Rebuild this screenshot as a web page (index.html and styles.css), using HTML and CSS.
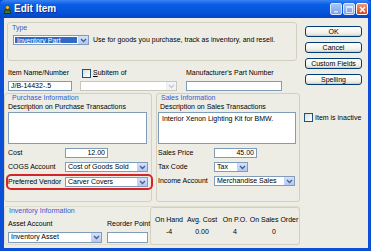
FILE: index.html
```html
<!DOCTYPE html>
<html lang="en">
<head>
    <meta charset="UTF-8">
    <title>Edit Item</title>
    <link rel="stylesheet" href="styles.css">
</head>
<body>
    <div class="window">
        <div class="titlebar">
            <svg class="app-icon" width="9" height="9" viewBox="0 0 9 9">
                <circle cx="4.5" cy="2.5" r="2" fill="#e8c020" stroke="#5a3a00" stroke-width="0.8"/>
                <path d="M1 8.5 L2 5 L7 5 L8 8.5 Z" fill="#3a7a20" stroke="#2a2a00" stroke-width="0.8"/>
            </svg>
            <span class="title">Edit Item</span>
            <div class="controls">
                <span class="ctl ctl-min"><svg width="9" height="9" viewBox="0 0 9 9"><rect x="2" y="6" width="4" height="1.5" fill="#fff"/></svg></span>
                <span class="ctl ctl-max"><svg width="9" height="9" viewBox="0 0 9 9"><rect x="1.5" y="1.5" width="6" height="6" fill="none" stroke="#fff" stroke-width="1"/><rect x="1.5" y="1.5" width="6" height="1.5" fill="#fff"/></svg></span>
                <span class="ctl ctl-close"><svg width="9" height="9" viewBox="0 0 9 9"><path d="M2 2 L7 7 M7 2 L2 7" stroke="#fff" stroke-width="1.5"/></svg></span>
            </div>
        </div>
        <div class="frame">
            <div class="client">
                <div class="main">
                    <!-- Type -->
                    <div class="group type-group">
                        <div class="type-label">Type</div>
                        <div class="type-row">
                            <div class="combo type-combo">
                                <span class="val selected">Inventory Part</span>
                                <span class="arrow"><svg width="7" height="7" viewBox="0 0 7 7"><path d="M1 2 L3.5 4.5 L6 2" fill="none" stroke="#4d6185" stroke-width="1.4"/></svg></span>
                            </div>
                            <span class="type-desc">Use for goods you purchase, track as inventory, and resell.</span>
                        </div>
                    </div>

                    <!-- Item name row -->
                    <div class="ident-row">
                        <div class="field field-name">
                            <div class="lbl">Item Name/Number</div>
                            <div class="input">J/B-14432-.5</div>
                        </div>
                        <div class="field field-sub">
                            <div class="lbl check-lbl"><span class="checkbox"></span><span><u>S</u>ubitem of</span></div>
                            <div class="combo disabled sub-combo">
                                <span class="val"></span>
                                <span class="arrow"><svg width="7" height="7" viewBox="0 0 7 7"><path d="M1 2 L3.5 4.5 L6 2" fill="none" stroke="#c2c8d4" stroke-width="1.4"/></svg></span>
                            </div>
                        </div>
                        <div class="field field-mfr">
                            <div class="lbl">Manufacturer's Part Number</div>
                            <div class="input"></div>
                        </div>
                    </div>

                    <!-- Purchase / Sales -->
                    <div class="info-row">
                        <div class="group purchase-group">
                            <div class="group-title">Purchase Information</div>
                            <div class="desc-lbl">Description on Purchase Transactions</div>
                            <div class="textarea"></div>
                            <div class="form-row">
                                <span class="row-lbl">Cost</span>
                                <div class="input num cost-input">12.00</div>
                            </div>
                            <div class="form-row">
                                <span class="row-lbl">COGS Account</span>
                                <div class="combo wide-combo">
                                    <span class="val">Cost of Goods Sold</span>
                                    <span class="arrow"><svg width="7" height="7" viewBox="0 0 7 7"><path d="M1 2 L3.5 4.5 L6 2" fill="none" stroke="#4d6185" stroke-width="1.4"/></svg></span>
                                </div>
                            </div>
                            <div class="form-row highlight">
                                <span class="row-lbl">Preferred Vendor</span>
                                <div class="combo wide-combo">
                                    <span class="val">Carver Covers</span>
                                    <span class="arrow"><svg width="7" height="7" viewBox="0 0 7 7"><path d="M1 2 L3.5 4.5 L6 2" fill="none" stroke="#4d6185" stroke-width="1.4"/></svg></span>
                                </div>
                            </div>
                        </div>
                        <div class="group sales-group">
                            <div class="group-title">Sales Information</div>
                            <div class="desc-lbl">Description on Sales Transactions</div>
                            <div class="textarea">Interior Xenon Lighting Kit for BMW.</div>
                            <div class="form-row">
                                <span class="row-lbl">Sales Price</span>
                                <div class="input num price-input">45.00</div>
                            </div>
                            <div class="form-row">
                                <span class="row-lbl">Tax Code</span>
                                <div class="combo tax-combo">
                                    <span class="val">Tax</span>
                                    <span class="arrow"><svg width="7" height="7" viewBox="0 0 7 7"><path d="M1 2 L3.5 4.5 L6 2" fill="none" stroke="#4d6185" stroke-width="1.4"/></svg></span>
                                </div>
                            </div>
                            <div class="form-row">
                                <span class="row-lbl">Income Account</span>
                                <div class="combo income-combo">
                                    <span class="val">Merchandise Sales</span>
                                    <span class="arrow"><svg width="7" height="7" viewBox="0 0 7 7"><path d="M1 2 L3.5 4.5 L6 2" fill="none" stroke="#4d6185" stroke-width="1.4"/></svg></span>
                                </div>
                            </div>
                        </div>
                    </div>

                    <!-- Inventory -->
                    <div class="group inventory-group">
                        <div class="inv-left">
                            <div class="group-title">Inventory Information</div>
                            <div class="inv-fields">
                                <div class="field">
                                    <div class="lbl">Asset Account</div>
                                    <div class="combo asset-combo">
                                        <span class="val">Inventory Asset</span>
                                        <span class="arrow"><svg width="7" height="7" viewBox="0 0 7 7"><path d="M1 2 L3.5 4.5 L6 2" fill="none" stroke="#4d6185" stroke-width="1.4"/></svg></span>
                                    </div>
                                </div>
                                <div class="field">
                                    <div class="lbl">Reorder Point</div>
                                    <div class="input reorder-input"></div>
                                </div>
                            </div>
                        </div>
                        <div class="inv-stats">
                            <div class="stat stat-hand"><span>On Hand</span><span>-4</span></div>
                            <div class="stat stat-avg"><span>Avg. Cost</span><span>0.00</span></div>
                            <div class="stat stat-po"><span>On P.O.</span><span>4</span></div>
                            <div class="stat stat-so"><span>On Sales Order</span><span>0</span></div>
                        </div>
                    </div>
                </div>

                <div class="side">
                    <button class="btn">OK</button>
                    <button class="btn">Cancel</button>
                    <button class="btn">Custom Fields</button>
                    <button class="btn">Spelling</button>
                    <div class="inactive"><span class="checkbox"></span><span>Item is inactive</span></div>
                </div>
            </div>
        </div>
    </div>
</body>
</html>
```

FILE: styles.css
```css
/* Base */
body {
    margin: 0;
    font-family: 'Liberation Sans', Arial, sans-serif;
    font-size: 7px;
    line-height: 8px;
    color: #000;
}

/* Window frame */
.window {
    width: 371px;
    height: 251px;
    display: flex;
    flex-direction: column;
    background: #0b4fd6;
}

.titlebar {
    height: 18px;
    display: flex;
    align-items: center;
    padding: 0 3px 0 3px;
    background: linear-gradient(#3b84f3, #0a5ee6 25%, #0452da 70%, #0644c4);
    border-radius: 5px 5px 0 0;
}

.app-icon {
    margin-right: 2px;
}

.title {
    color: #fff;
    font-weight: bold;
    font-size: 10px;
    text-shadow: 1px 1px 0 #0a2a7a;
}

.controls {
    margin-left: auto;
    display: flex;
    gap: 1px;
}

.ctl {
    width: 10px;
    height: 10px;
    border: 1px solid #fff;
    border-radius: 2px;
    display: flex;
    align-items: center;
    justify-content: center;
}

.ctl-min,
.ctl-max {
    background: linear-gradient(#c6d7fa, #8fb0ee);
    opacity: 0.85;
}

.ctl-close {
    background: linear-gradient(#f09a78, #d9451f);
}

.frame {
    flex: 1;
    padding: 0 3px 3px 4px;
    display: flex;
}

.client {
    flex: 1;
    display: flex;
    background: #eeede5;
}

/* Main column */
.main {
    width: 296px;
    padding-top: 4px;
}

.group {
    box-sizing: border-box;
    border: 1px solid #d3d0bf;
    border-radius: 3px;
}

.group-title {
    color: #2f5cd0;
    padding-left: 4px;
}

/* Type */
.type-group {
    margin-left: 3px;
    width: 290px;
    height: 39px;
    padding: 1px 0 0 4px;
}

.type-label {
    color: #2f5cd0;
}

.type-row {
    display: flex;
    align-items: center;
    margin-top: 3px;
}

.type-combo {
    width: 76px;
    height: 11px;
    margin-left: 1px;
}

.type-desc {
    margin-left: 4px;
}

/* Inputs */
.input,
.combo,
.textarea {
    box-sizing: border-box;
    background: #fff;
    border: 1px solid #7f9db9;
}

.input {
    height: 10px;
    padding: 0 2px;
    line-height: 8px;
    white-space: nowrap;
}

.input.num {
    text-align: right;
}

.combo {
    height: 10px;
    display: flex;
    align-items: stretch;
}

.combo .val {
    flex: 1;
    padding: 0 2px;
    line-height: 8px;
    white-space: nowrap;
    overflow: hidden;
}

.combo .val.selected {
    background: #316ac5;
    color: #fff;
    margin: 1px 1px 1px 1px;
    line-height: 7px;
}

.combo .arrow {
    width: 9px;
    margin: 0;
    display: flex;
    align-items: center;
    justify-content: center;
    background: linear-gradient(#d4e1fd, #b3c8f6);
    border-left: 1px solid #c3d3f8;
}

.combo.disabled {
    border-color: #c9c7ba;
}

.combo.disabled .arrow {
    background: #f2f3f6;
    border-left-color: #eceef2;
}

.textarea {
    height: 32px;
    padding: 2px 3px;
}

.checkbox {
    display: inline-block;
    box-sizing: border-box;
    width: 9px;
    height: 9px;
    border: 1px solid #1c5180;
    background: linear-gradient(135deg, #dcdcd7, #fff);
}

/* Item name row */
.ident-row {
    display: flex;
    margin-top: 8px;
}

.lbl {
    height: 8px;
    white-space: nowrap;
}

.field .input,
.field .combo {
    margin-top: 4px;
}

.field-name {
    margin-left: 4px;
    width: 64px;
}

.field-sub {
    margin-left: 8px;
    width: 97px;
}

.check-lbl {
    display: flex;
    align-items: center;
    gap: 2px;
    margin-left: 2px;
}

.field-mfr {
    margin-left: 9px;
    width: 96px;
}

/* Purchase / sales */
.info-row {
    display: flex;
    gap: 4px;
    margin-top: 2px;
}

.purchase-group {
    width: 148px;
    height: 109px;
    padding: 0 3px;
}

.sales-group {
    width: 144px;
    height: 109px;
    padding: 0 1px;
}

.sales-group .group-title {
    padding-left: 3px;
}

.desc-lbl {
    margin-top: 1px;
}

.sales-group .desc-lbl {
    padding-left: 2px;
}

.purchase-group .textarea {
    margin-top: 1px;
    width: 139px;
}

.sales-group .textarea {
    margin-top: 1px;
    width: 138px;
}

.form-row {
    display: flex;
    align-items: center;
    margin-top: 4px;
}

.row-lbl {
    width: 57px;
    flex-shrink: 0;
}

.sales-group .row-lbl {
    width: 56px;
}

.form-row.highlight {
    margin: 2px -5px 0 -2px;
    padding: 1px 0;
    border: 2px solid #d3262b;
    border-radius: 5px;
}

.cost-input,
.price-input {
    width: 43px;
}

.wide-combo {
    width: 83px;
}

.tax-combo {
    width: 34px;
}

.income-combo {
    width: 81px;
}

/* Inventory */
.inventory-group {
    margin-top: 4px;
    height: 39px;
    display: flex;
    border-color: #dedbcc;
}

.inv-left {
    width: 145px;
}

.inv-fields {
    display: flex;
    margin-top: 5px;
    padding-left: 3px;
}

.inv-fields .field + .field {
    margin-left: 5px;
}

.asset-combo {
    width: 94px;
    height: 11px;
}

.reorder-input {
    width: 41px;
    height: 11px;
}

.inv-stats {
    flex: 1;
    box-sizing: border-box;
    margin: 0 -1px -1px 0;
    border: 1px solid #d3d0bf;
    border-radius: 3px;
    display: flex;
    padding: 8px 0 0 4px;
}

.stat {
    display: flex;
    flex-direction: column;
    align-items: center;
    gap: 4px;
    white-space: nowrap;
}

.stat-hand {
    width: 28px;
}

.stat-avg {
    width: 34px;
    margin-left: 2px;
}

.stat-po {
    width: 24px;
    margin-left: 4px;
}

.stat-so {
    width: 46px;
    margin-left: 4px;
}

/* Side buttons */
.side {
    margin-left: 4px;
    padding-top: 8px;
    display: flex;
    flex-direction: column;
}

.btn {
    width: 57px;
    height: 11px;
    margin: 0 0 5px 1px;
    padding: 0;
    font-family: inherit;
    font-size: 7px;
    line-height: 8px;
    color: #000;
    border: 1px solid #003c74;
    border-radius: 3px;
    background: linear-gradient(#fff, #f3f2ec 60%, #dedcd0);
    box-shadow: inset 0 -1px 0 #d6d0c0;
}

.inactive {
    display: flex;
    align-items: center;
    gap: 2px;
    margin-top: 23px;
}
```
